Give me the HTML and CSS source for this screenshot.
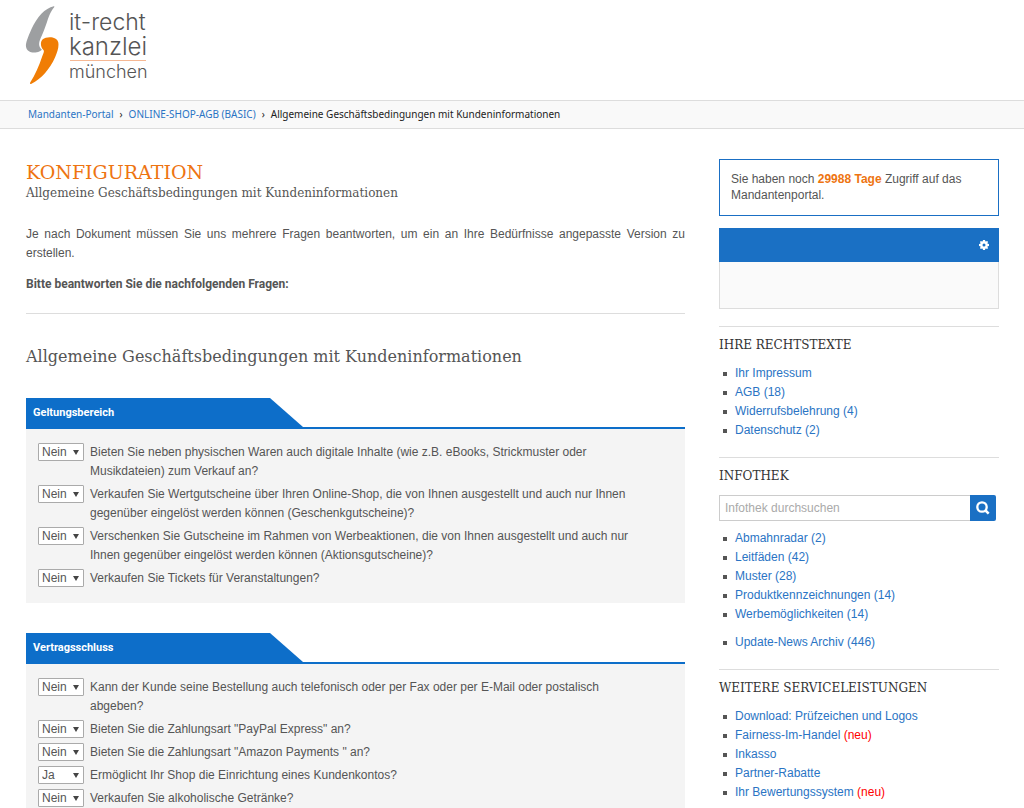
FILE: index.html
```html
<!DOCTYPE html>
<html lang="de">
<head>
<meta charset="utf-8">
<meta name="viewport" content="width=device-width, initial-scale=1">
<title>Konfiguration – Mandanten-Portal</title>
<link rel="stylesheet" href="styles.css">
</head>
<body>
<header class="header">
  <svg class="logo" width="130" height="84" viewBox="0 0 130 84" role="img" aria-label="it-recht kanzlei münchen">
    <path fill="#9d9fa1" d="M28.800 6.200C20 8 12 17 6.500 29C3 37 .5 43 1 46.500C1.500 50.500 5 52.500 9 52.500C13 52.500 16.500 51 16.800 49.500C13.500 47 13.500 43 15.500 38.500C18 33 20 28 22 22C24.500 14.500 26 11 29 7.500C29.500 6.800 29.500 6.200 28.800 6.200Z"/>
    <path fill="#f07d05" d="M17.500 39.500C22 36 32 36.500 33.300 42.500C34 47 32.500 52 30 57.500C25 69 16 79 6.500 83.700C5 84.300 4.500 83.500 5.500 82C10 75 14 66 17 57C18.500 53 19.500 51.500 18.500 50C15.500 47 15 42.500 17.500 39.500Z"/>
    <g class="logo-text">
      <text x="44" y="30" font-size="23">it-recht</text>
      <text x="44" y="55" font-size="24">kanzlei</text>
      <text x="44" y="78" font-size="18">münchen</text>
    </g>
    <path stroke="#f6b894" d="M45 60.500H121"/>
  </svg>
</header>
<nav class="breadcrumb" aria-label="Brotkrumen">
  <a href="#">Mandanten-Portal</a><span>›</span><a href="#">ONLINE-SHOP-AGB (BASIC)</a><span>›</span><span class="current">Allgemeine Geschäftsbedingungen mit Kundeninformationen</span>
</nav>
<div class="page">
  <main class="main">
    <h1 class="title">KONFIGURATION</h1>
    <p class="subtitle">Allgemeine Geschäftsbedingungen mit Kundeninformationen</p>
    <p class="intro">Je nach Dokument müssen Sie uns mehrere Fragen beantworten, um ein an Ihre Bedürfnisse angepasste Version zu erstellen.</p>
    <p class="prompt">Bitte beantworten Sie die nachfolgenden Fragen:</p>
    <h2 class="section-title">Allgemeine Geschäftsbedingungen mit Kundeninformationen</h2>
    <section class="group">
      <div class="tab-bar"><h3 class="tab">Geltungsbereich</h3></div>
      <div class="questions">
        <div class="question"><span class="pick"><select id="q1"><option>Nein</option><option>Ja</option></select></span><label for="q1">Bieten Sie neben physischen Waren auch digitale Inhalte (wie z.B. eBooks, Strickmuster oder<br>Musikdateien) zum Verkauf an?</label></div>
        <div class="question"><span class="pick"><select id="q2"><option>Nein</option><option>Ja</option></select></span><label for="q2">Verkaufen Sie Wertgutscheine über Ihren Online-Shop, die von Ihnen ausgestellt und auch nur Ihnen<br>gegenüber eingelöst werden können (Geschenkgutscheine)?</label></div>
        <div class="question"><span class="pick"><select id="q3"><option>Nein</option><option>Ja</option></select></span><label for="q3">Verschenken Sie Gutscheine im Rahmen von Werbeaktionen, die von Ihnen ausgestellt und auch nur<br>Ihnen gegenüber eingelöst werden können (Aktionsgutscheine)?</label></div>
        <div class="question"><span class="pick"><select id="q4"><option>Nein</option><option>Ja</option></select></span><label for="q4">Verkaufen Sie Tickets für Veranstaltungen?</label></div>
      </div>
    </section>
    <section class="group">
      <div class="tab-bar"><h3 class="tab">Vertragsschluss</h3></div>
      <div class="questions">
        <div class="question"><span class="pick"><select id="q5"><option>Nein</option><option>Ja</option></select></span><label for="q5">Kann der Kunde seine Bestellung auch telefonisch oder per Fax oder per E-Mail oder postalisch<br>abgeben?</label></div>
        <div class="question"><span class="pick"><select id="q6"><option>Nein</option><option>Ja</option></select></span><label for="q6">Bieten Sie die Zahlungsart "PayPal Express" an?</label></div>
        <div class="question"><span class="pick"><select id="q7"><option>Nein</option><option>Ja</option></select></span><label for="q7">Bieten Sie die Zahlungsart "Amazon Payments " an?</label></div>
        <div class="question"><span class="pick"><select id="q8"><option>Nein</option><option selected>Ja</option></select></span><label for="q8">Ermöglicht Ihr Shop die Einrichtung eines Kundenkontos?</label></div>
        <div class="question"><span class="pick"><select id="q9"><option>Nein</option><option>Ja</option></select></span><label for="q9">Verkaufen Sie alkoholische Getränke?</label></div>
      </div>
    </section>
  </main>
  <aside class="sidebar">
    <p class="notice">Sie haben noch <strong>29988 Tage</strong> Zugriff auf das Mandantenportal.</p>
    <div class="account">
      <div class="account-head">
        <button class="gear" type="button" aria-label="Einstellungen">
          <svg width="10" height="10" viewBox="0 0 10 10"><path fill="#fff" fill-rule="evenodd" d="M4 0H6L6.300 1.300L7 1.600L8.100 .9L9.100 1.900L8.400 3L8.700 3.700L10 4V6L8.700 6.300L8.400 7L9.100 8.100L8.100 9.100L7 8.400L6.300 8.700L6 10H4L3.700 8.700L3 8.400L1.900 9.100L.9 8.100L1.600 7L1.300 6.300L0 6V4L1.300 3.700L1.600 3L.9 1.900L1.900 .9L3 1.600L3.700 1.300ZM5 3.500A1.500 1.500 0 1 0 5 6.500A1.500 1.500 0 1 0 5 3.500Z"/></svg>
        </button>
      </div>
      <div class="account-body"></div>
    </div>
    <section class="box">
      <h2>IHRE RECHTSTEXTE</h2>
      <ul>
        <li><a href="#">Ihr Impressum</a></li>
        <li><a href="#">AGB (18)</a></li>
        <li><a href="#">Widerrufsbelehrung (4)</a></li>
        <li><a href="#">Datenschutz (2)</a></li>
      </ul>
    </section>
    <section class="box">
      <h2>INFOTHEK</h2>
      <form class="search">
        <input type="text" placeholder="Infothek durchsuchen" aria-label="Infothek durchsuchen">
        <button type="button" aria-label="Suchen">
          <svg width="14" height="14" viewBox="0 0 14 14" fill="none" stroke="#fff"><circle cx="6" cy="6" r="4.700" stroke-width="2.300"/><path d="M9.500 9.500L12.700 12.700" stroke-width="2.500"/></svg>
        </button>
      </form>
      <ul>
        <li><a href="#">Abmahnradar (2)</a></li>
        <li><a href="#">Leitfäden (42)</a></li>
        <li><a href="#">Muster (28)</a></li>
        <li><a href="#">Produktkennzeichnungen (14)</a></li>
        <li><a href="#">Werbemöglichkeiten (14)</a></li>
        <li class="apart"><a href="#">Update-News Archiv (446)</a></li>
      </ul>
    </section>
    <section class="box">
      <h2>WEITERE SERVICELEISTUNGEN</h2>
      <ul>
        <li><a href="#">Download: Prüfzeichen und Logos</a></li>
        <li><a href="#">Fairness-Im-Handel <span class="new">(neu)</span></a></li>
        <li><a href="#">Inkasso</a></li>
        <li><a href="#">Partner-Rabatte</a></li>
        <li><a href="#">Ihr Bewertungssystem <span class="new">(neu)</span></a></li>
      </ul>
    </section>
  </aside>
</div>
</body>
</html>
```

FILE: styles.css
```css
* { box-sizing: border-box; }
body {
  margin: 0;
  background: #fff;
  color: #555;
  font: 12px/19px "Liberation Sans", Arial, sans-serif;
}
h1, h2, h3, p, ul { margin: 0; padding: 0; }
a { color: #2a74c4; text-decoration: none; }
.header { padding: 0 25px; height: 100px; }
.logo { display: block; }
.logo-text { font-family: Inter, sans-serif; font-weight: 300; fill: #555; }
.breadcrumb {
  display: flex;
  gap: 6px;
  padding: 0 28px;
  border-top: 1px solid #ddd;
  border-bottom: 1px solid #ddd;
  background: #f9f9f9;
  color: #222;
  font-family: "Noto Sans", sans-serif;
  font-size: 10px;
  line-height: 27px;
}
.page {
  display: grid;
  grid-template-columns: 1fr 280px;
  gap: 34px;
  padding: 30px 25px 0 26px;
}
.title {
  color: #ee7411;
  font: 19px/26px "DejaVu Serif", serif;
}
.subtitle { font: 12px/16px "DejaVu Serif", serif; }
.intro { margin-top: 24px; text-align: justify; }
.prompt {
  margin-top: 12px;
  padding-bottom: 19px;
  border-bottom: 1px solid #ddd;
  font-family: Roboto, sans-serif;
  font-weight: 700;
}
.section-title {
  margin: 30px 0 28px;
  font: 16px/26px "DejaVu Serif", serif;
}
.group { margin-bottom: 30px; }
.tab-bar { border-bottom: 2px solid #0d6ec9; background: #fff; }
.tab {
  width: 277px;
  padding: 0 7px;
  background: #0d6ec9;
  clip-path: polygon(0 0, 244px 0, 100% 100%, 0 100%);
  color: #fff;
  font-family: Roboto, sans-serif;
  font-size: 11px;
  line-height: 29px;
  font-weight: 700;
}
.questions {
  display: grid;
  gap: 4px;
  padding: 14px 12px 15px;
  background: #f4f4f4;
}
.question {
  display: grid;
  grid-template-columns: 46px 1fr;
  gap: 6px;
  align-items: start;
}
.pick { display: grid; position: relative; }
.pick::after {
  content: "";
  position: absolute;
  top: 7px;
  right: 5px;
  width: 6px;
  height: 5px;
  background: #444;
  clip-path: polygon(0 0, 100% 0, 50% 100%);
  pointer-events: none;
}
.pick select {
  appearance: none;
  height: 18px;
  padding: 0 3px;
  border: 1px solid #aaa;
  border-radius: 1px;
  background: #fff;
  color: #555;
  font: inherit;
  line-height: 16px;
}
.notice {
  padding: 11px 11px 12px;
  border: 1px solid #1a6fc4;
  line-height: 16px;
}
.notice strong { color: #ee7411; }
.account { margin: 12px 0 17px; }
.account-head {
  display: flex;
  justify-content: flex-end;
  align-items: center;
  height: 34px;
  padding: 0 10px;
  background: #1a70c4;
}
.gear {
  display: flex;
  padding: 0;
  border: 0;
  background: none;
}
.account-body {
  height: 47px;
  border: 1px solid #ddd;
  border-top: 0;
  background: #fafafa;
}
.box { padding: 9px 0 17px; border-top: 1px solid #ddd; }
.box h2 {
  margin-bottom: 9px;
  color: #333;
  font: 12px/19px "DejaVu Serif", serif;
}
.box ul { list-style: none; }
.box li {
  display: flex;
  align-items: center;
  gap: 8px;
  padding-left: 4px;
}
.box li::before {
  content: "";
  width: 4px;
  height: 4px;
  background: #555;
}
.box .apart { margin-top: 9px; }
.box a { white-space: pre; }
.new { color: #f00; }
.search {
  display: flex;
  height: 26px;
  margin-bottom: 8px;
  padding-right: 3px;
}
.search input {
  flex: 1;
  min-width: 0;
  padding: 0 5px;
  border: 1px solid #ccc;
  border-right: 0;
  color: #555;
  font: inherit;
}
.search input::placeholder { color: #aaa; }
.search button {
  display: flex;
  justify-content: center;
  align-items: center;
  width: 26px;
  padding: 0;
  border: 0;
  border-radius: 0 2px 2px 0;
  background: #1a70c4;
}
```
